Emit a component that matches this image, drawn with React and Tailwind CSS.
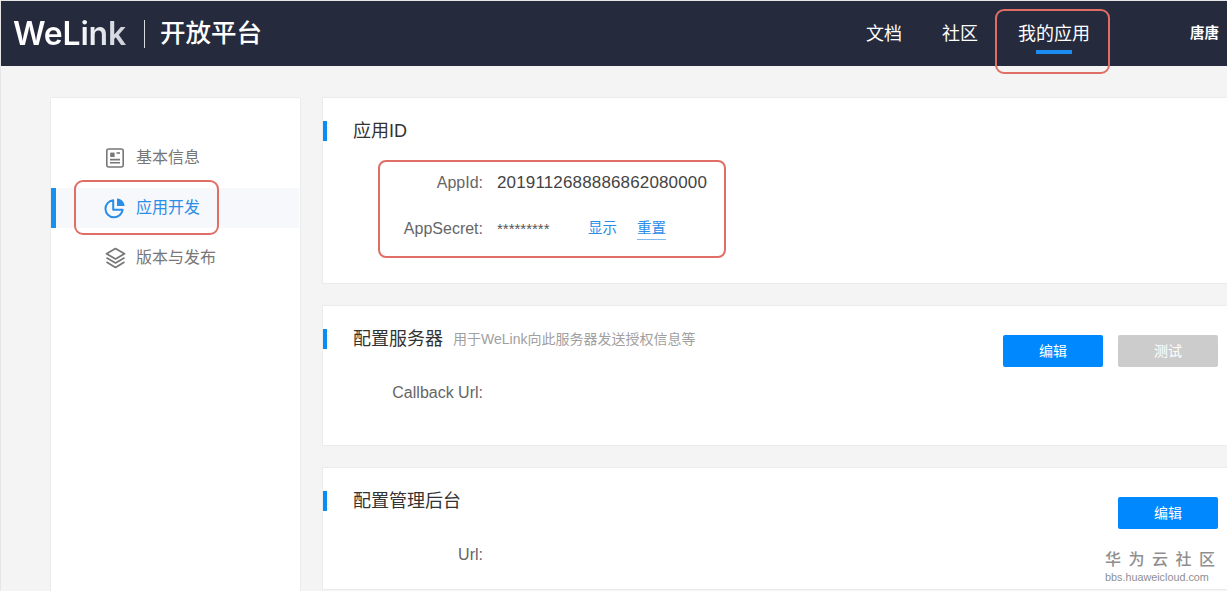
import React from 'react';

const navItems = [
  { label: '文档', active: false },
  { label: '社区', active: false },
  { label: '我的应用', active: true },
];

function InfoIcon() {
  return (
    <svg width="20" height="20" viewBox="0 0 20 20" fill="none" stroke="currentColor" strokeWidth="1.6">
      <rect x="1.8" y="1" width="16.4" height="18" rx="2" />
      <rect x="5.2" y="4.6" width="4.4" height="4.4" fill="currentColor" stroke="none" />
      <path d="M5 11.6h10M5 14.8h10" />
      <path d="M11.5 5h3.5" />
    </svg>
  );
}

function PieIcon() {
  return (
    <svg width="22" height="22" viewBox="0 0 22 22" fill="none" stroke="currentColor" strokeWidth="2">
      <path d="M9.2 3.2a8.6 8.6 0 1 0 9.4 9.6H9.2z" strokeLinejoin="round" />
      <path d="M13 1.4a7.8 7.8 0 0 1 7.6 7.6H13z" fill="currentColor" stroke="none" />
    </svg>
  );
}

function LayersIcon() {
  return (
    <svg width="21" height="22" viewBox="0 0 21 22" fill="none" stroke="currentColor" strokeWidth="1.7" strokeLinejoin="round">
      <path d="M10.5 1.5l9 5.2-9 5.2-9-5.2z" />
      <path d="M1.5 10.8l9 5.2 9-5.2" />
      <path d="M1.5 15l9 5.5 9-5.5" />
    </svg>
  );
}

const sideItems = [
  { label: '基本信息', icon: <InfoIcon /> },
  { label: '应用开发', icon: <PieIcon />, active: true },
  { label: '版本与发布', icon: <LayersIcon /> },
];

function Header() {
  return (
    <header className="h-[65px] shrink-0 bg-[#262a3d] flex items-center text-white">
      <div className="ml-[12px] flex items-center">
        <span className="font-['Inter',sans-serif] text-[32px] font-semibold tracking-[-0.2px] bg-gradient-to-r from-white via-white to-[#c9cbd6] bg-clip-text text-transparent w-[119px]">
          WeLink
        </span>
        <span className="ml-[12px] w-px h-[28px] bg-[#d8d9df]" />
        <span className="ml-[15px] text-[25.5px] font-medium whitespace-nowrap">开放平台</span>
      </div>
      <nav className="ml-auto flex gap-[40px] text-[18px] leading-[24px]">
        {navItems.map((item) => (
          <a key={item.label} className="relative block">
            {item.label}
            {item.active && <span className="absolute left-[18px] top-[28px] w-[36px] h-[4px] bg-[#1b8cf2]" />}
          </a>
        ))}
      </nav>
      <span className="ml-[100px] mr-[8px] text-[14.5px] font-bold">唐唐</span>
    </header>
  );
}

function Sidebar() {
  return (
    <aside className="w-[251px] shrink-0 bg-white border border-[#ebebeb] border-b-0 rounded-t-[2px] pt-[40px] flex flex-col gap-[10px]">
      {sideItems.map((item) => (
        <div
          key={item.label}
          className={
            item.active
              ? 'h-[40px] flex items-center border-l-[5px] border-[#1890f0] bg-[#f6f8fb] text-[#2a8de8] pl-[48px] mr-[1px]'
              : 'h-[40px] flex items-center text-[#777777] pl-[53px]'
          }
        >
          <span className="w-[22px] h-[22px] flex items-center justify-center">{item.icon}</span>
          <span className="ml-[10px] text-[16px]">{item.label}</span>
        </div>
      ))}
    </aside>
  );
}

function Title({ text, sub }) {
  return (
    <div className="flex items-center h-[20px]">
      <span className="w-[4px] h-[20px] bg-[#0a8cf5]" />
      <h2 className="ml-[26px] text-[18px] text-[#333333] font-normal whitespace-nowrap">{text}</h2>
      {sub && <span className="ml-[10px] text-[14px] text-[#a0a0a0] whitespace-nowrap">{sub}</span>}
    </div>
  );
}

function Field({ label, children }) {
  return (
    <div className="flex items-center h-[24px]">
      <span className="w-[160px] text-right text-[16px] text-[#666666]">{label}</span>
      <div className="ml-[14px] flex items-center">{children}</div>
    </div>
  );
}

function Button({ children, disabled }) {
  return (
    <button className={`w-[100px] h-[32px] rounded-[2px] text-[14px] text-white ${disabled ? 'bg-[#cccccc]' : 'bg-[#0088ff]'}`}>
      {children}
    </button>
  );
}

export default function App() {
  return (
    <div className="w-[1227px] h-[591px] overflow-hidden flex flex-col bg-[#f4f4f5] border-t border-l border-[#e6e6e6] font-['Liberation_Sans','Noto_Sans_CJK_SC',sans-serif] relative">
      <Header />
      <div className="flex-1 min-h-0 flex pt-[31px] pl-[49px] gap-[21px]">
        <Sidebar />
        <main className="flex-1 min-w-0 flex flex-col gap-[21px]">
          <section className="h-[187px] shrink-0 bg-white border border-[#ebebeb] border-r-0 pt-[23px]">
            <Title text="应用ID" />
            <div className="mt-[30px] flex flex-col gap-[22px]">
              <Field label="AppId:">
                <span className="text-[17px] tracking-[0.15px] text-[#444444]">2019112688886862080000</span>
              </Field>
              <Field label="AppSecret:">
                <span className="text-[15px] text-[#555555] w-[91px]">*********</span>
                <a className="text-[14.5px] text-[#2a8de8] underline underline-offset-2 decoration-[#2a8de8]/0">显示</a>
                <a className="ml-[20px] text-[14.5px] text-[#2a8de8] border-b border-[#2a8de8]/60">重置</a>
              </Field>
            </div>
          </section>

          <section className="h-[141px] shrink-0 bg-white border border-[#ebebeb] border-r-0 pt-[23px] flex">
            <div className="flex-1">
              <Title text="配置服务器" sub="用于WeLink向此服务器发送授权信息等" />
              <div className="mt-[32px]">
                <Field label="Callback Url:" />
              </div>
            </div>
            <div className="flex gap-[15px] pr-[9px] pt-[6px] items-start">
              <Button>编辑</Button>
              <Button disabled>测试</Button>
            </div>
          </section>

          <section className="flex-1 min-h-0 mb-[1px] bg-white border border-[#ebebeb] border-r-0 pt-[23px] flex">
            <div className="flex-1">
              <Title text="配置管理后台" />
              <div className="mt-[32px]">
                <Field label="Url:" />
              </div>
            </div>
            <div className="pr-[9px] pt-[6px]">
              <Button>编辑</Button>
            </div>
          </section>
        </main>
      </div>

      {/* red annotation boxes */}
      <div className="absolute left-[994px] top-[8px] w-[115px] h-[65px] rounded-[9px] border-2 border-[#df6f66]" />
      <div className="absolute left-[73px] top-[179px] w-[145px] h-[55px] rounded-[9px] border-2 border-[#df6f66]" />
      <div className="absolute left-[377px] top-[159px] w-[348px] h-[98px] rounded-[8px] border-2 border-[#df6f66]" />

      {/* watermark */}
      <div className="absolute left-[1104px] top-[549px] w-[110px] text-[#8f8f8f]">
        <div className="flex justify-between text-[16px] leading-[20px] font-medium">
          <span>华</span><span>为</span><span>云</span><span>社</span><span>区</span>
        </div>
        <div className="text-[10.8px] leading-[12px] mt-[1px] whitespace-nowrap">bbs.huaweicloud.com</div>
      </div>
    </div>
  );
}
